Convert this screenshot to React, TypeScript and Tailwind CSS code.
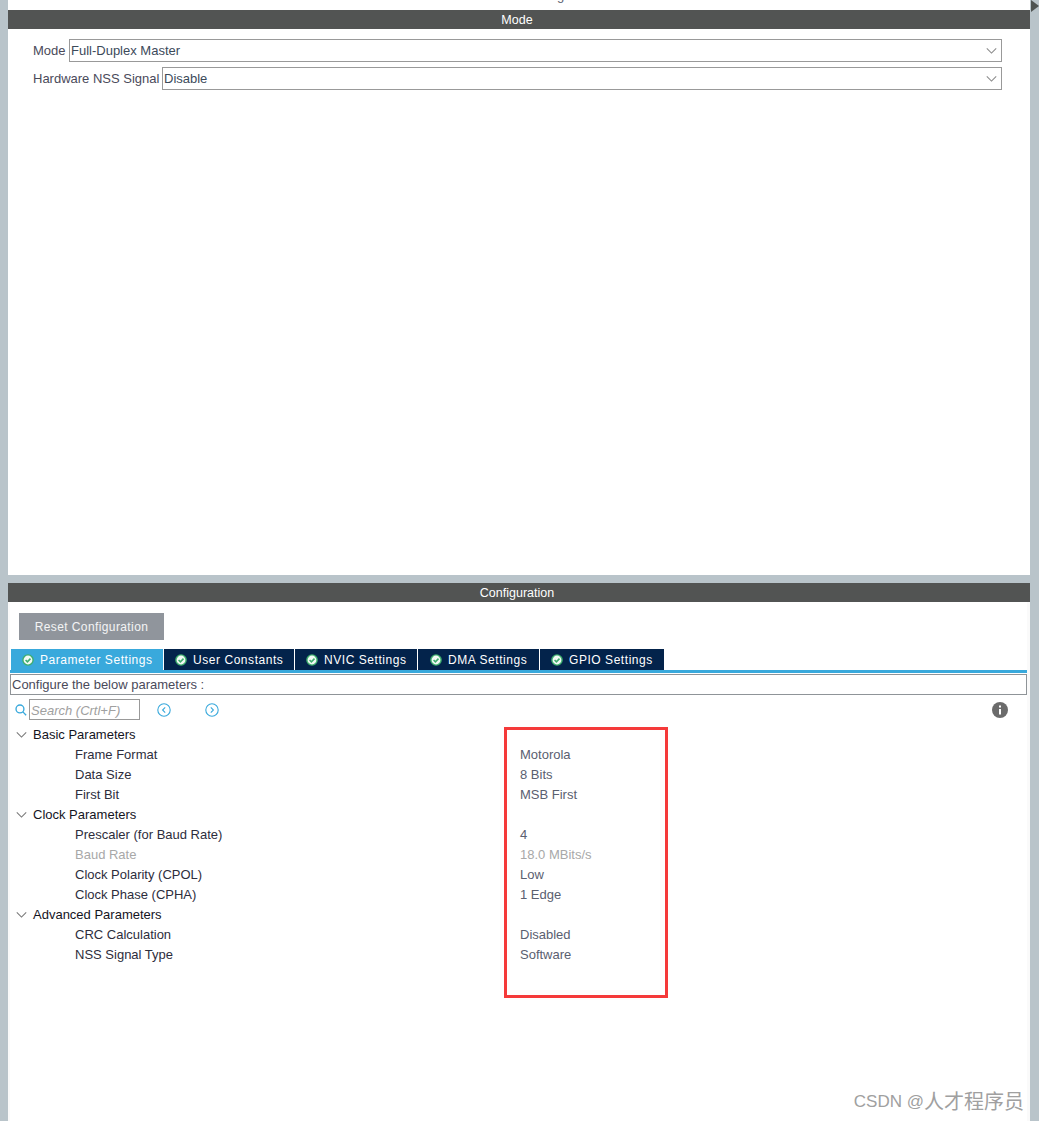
const font = { fontFamily: '"Liberation Sans", Arial, sans-serif' }

const tabs = [
  { name: 'Parameter Settings', width: 'w-[152px] pl-[11px]', active: true },
  { name: 'User Constants', width: 'w-[130px] pl-[11px]', active: false },
  { name: 'NVIC Settings', width: 'w-[122px] pl-[11px]', active: false },
  { name: 'DMA Settings', width: 'w-[121px] pl-[12px]', active: false },
  { name: 'GPIO Settings', width: 'w-[124px] pl-[11px]', active: false },
]

const groups = [
  {
    title: 'Basic Parameters',
    rows: [
      { label: 'Frame Format', value: 'Motorola' },
      { label: 'Data Size', value: '8 Bits' },
      { label: 'First Bit', value: 'MSB First' },
    ],
  },
  {
    title: 'Clock Parameters',
    rows: [
      { label: 'Prescaler (for Baud Rate)', value: '4' },
      { label: 'Baud Rate', value: '18.0 MBits/s', muted: true },
      { label: 'Clock Polarity (CPOL)', value: 'Low' },
      { label: 'Clock Phase (CPHA)', value: '1 Edge' },
    ],
  },
  {
    title: 'Advanced Parameters',
    rows: [
      { label: 'CRC Calculation', value: 'Disabled' },
      { label: 'NSS Signal Type', value: 'Software' },
    ],
  },
]

function Chevron({ className }: { className: string }) {
  return (
    <svg viewBox="0 0 12 7" className={className} fill="none" stroke="currentColor" strokeWidth="1.2">
      <path d="M0.5 0.5 L6 6 L11.5 0.5" />
    </svg>
  )
}

function TabCheck() {
  return (
    <svg viewBox="0 0 12 12" className="w-3 h-3 shrink-0">
      <circle cx="6" cy="6" r="5.8" fill="#3fae6e" />
      <circle cx="6" cy="6" r="4.4" fill="#f2faf5" />
      <path d="M3.6 6 L5.4 7.8 L8.5 4.6" fill="none" stroke="#3fae6e" strokeWidth="1.6" />
    </svg>
  )
}

function NavCircle({ right }: { right?: boolean }) {
  return (
    <svg viewBox="0 0 14 14" className="w-[14px] h-[14px]" fill="none" stroke="#39a9dc" strokeWidth="1.1">
      <circle cx="7" cy="7" r="6.2" />
      <path d={right ? 'M5.8 4.4 L8.4 7 L5.8 9.6' : 'M8.2 4.4 L5.6 7 L8.2 9.6'} />
    </svg>
  )
}

function SelectRow({ label, value, labelWidth }: { label: string; value: string; labelWidth: string }) {
  return (
    <div className="flex items-center h-[23px]">
      <span className={`${labelWidth} pl-[1px] text-[13px] text-[#4a4a5a] shrink-0 whitespace-nowrap`}>{label}</span>
      <div className="flex-1 h-[23px] border border-[#999999] bg-white flex items-center justify-between pl-[1px] pr-[4px] text-[13px] text-[#3c4a5a]">
        <span>{value}</span>
        <Chevron className="w-[11px] h-[6px] text-[#8a8a8a]" />
      </div>
    </div>
  )
}

export default function App() {
  return (
    <div className="relative w-[1039px] h-[1121px] overflow-hidden bg-[#b9c4ca] pl-[8px] pr-[9px]" style={font}>
      <div className="absolute right-0 top-0 w-0 h-0 border-y-[6px] border-y-transparent border-l-[8px] border-l-[#4e5352]" />

      <section className="h-[575px] bg-white pt-[10px]">
        <div className="h-[19px] bg-[#525453] text-white text-[12.5px] pt-[1px] leading-[19px] text-center pr-[4px]">Mode</div>
        <div className="pt-[10px] pl-[24px] pr-[28px] flex flex-col gap-[5px]">
          <SelectRow label="Mode" value="Full-Duplex Master" labelWidth="w-[37px]" />
          <SelectRow label="Hardware NSS Signal" value="Disable" labelWidth="w-[130px]" />
        </div>
      </section>

      <section className="mt-[8px] h-[538px] bg-white">
        <div className="h-[19px] bg-[#525453] text-white text-[12.5px] pt-[1px] leading-[19px] text-center pr-[4px]">Configuration</div>
        <div className="pl-[2px] pr-[3px] h-[519px] bg-[#fafafa]">
          <div className="bg-white h-full">
            <div className="pt-[11px] pl-[9px]">
              <div className="w-[145px] h-[27px] pt-[1px] bg-[#90959c] text-white/90 text-[12px] tracking-[0.4px] leading-[27px] text-center">
                Reset Configuration
              </div>
            </div>
            <div className="flex mt-[9px] pl-[1px] gap-[1px] h-[21px]">
              {tabs.map((t) => (
                <div
                  key={t.name}
                  className={`${t.width} ${t.active ? 'bg-[#39a9dc]' : 'bg-[#03234b]'} flex items-center gap-[6px] text-white text-[12px] tracking-[0.55px] whitespace-nowrap`}
                >
                  <TabCheck />
                  <span>{t.name}</span>
                </div>
              ))}
            </div>
            <div className="h-[3px] bg-[#39a9dc]" />
            <div className="h-[1px]" />
            <div className="h-[21px] border border-[#8f9498] text-[13px] leading-[19px] text-[#4a4a5a] pl-[1px]">
              Configure the below parameters :
            </div>
            <div className="flex items-center h-[29px] relative">
              <svg viewBox="0 0 14 14" className="w-[12px] h-[12px] ml-[5px]" fill="none" stroke="#39a9dc" strokeWidth="1.6">
                <circle cx="5.8" cy="5.8" r="4.6" />
                <path d="M9.2 9.2 L13 13" />
              </svg>
              <div className="ml-[2px] w-[111px] h-[21px] border border-[#999999] text-[13px] leading-[21px] italic text-[#a0a0a0] pl-[1px]">
                Search (Crtl+F)
              </div>
              <div className="ml-[17px]"><NavCircle /></div>
              <div className="ml-[34px]"><NavCircle right /></div>
              <svg viewBox="0 0 16 16" className="absolute right-[19px] top-[7px] w-4 h-4">
                <circle cx="8" cy="8" r="8" fill="#6b6b6b" />
                <rect x="7" y="7" width="2" height="5.5" fill="white" />
                <rect x="7" y="3.5" width="2" height="2" fill="white" />
              </svg>
            </div>
            <div>
              {groups.map((g) => (
                <div key={g.title}>
                  <div className="flex h-[20px] pt-[1px] leading-[20px] text-[13px] text-[#14141e]">
                    <Chevron className="self-center w-[11px] h-[6px] ml-[6px] mr-[6px] text-[#777777]" />
                    <span>{g.title}</span>
                  </div>
                  {g.rows.map((r) => (
                    <div key={r.label} className="flex h-[20px] pt-[1px] leading-[20px] text-[13px]">
                      <span className={`w-[510px] pl-[65px] shrink-0 ${r.muted ? 'text-[#a8a8a8]' : 'text-[#2d2d3c]'}`}>{r.label}</span>
                      <span className={r.muted ? 'text-[#a8a8a8]' : 'text-[#5a6070]'}>{r.value}</span>
                    </div>
                  ))}
                </div>
              ))}
            </div>
          </div>
        </div>
      </section>

      {/* descender of a line cut off by the top of the screenshot */}
      <div className="absolute left-[557px] top-[-12px] text-[13px] leading-[15px] text-[#5a6070]">g</div>

      <div className="absolute left-[504px] top-[727px] w-[164px] h-[271px] border-[3px] border-[#f53a3a]" />
      <div
        className="absolute right-[15px] top-[1090px] flex items-center leading-[24px] text-[#a0a0a0] whitespace-nowrap"
        style={{ fontFamily: '"Liberation Sans", "Noto Sans CJK SC", sans-serif' }}
      >
        <span className="text-[17px]">CSDN @</span>
        <span className="text-[20px]">人才程序员</span>
      </div>
    </div>
  )
}
